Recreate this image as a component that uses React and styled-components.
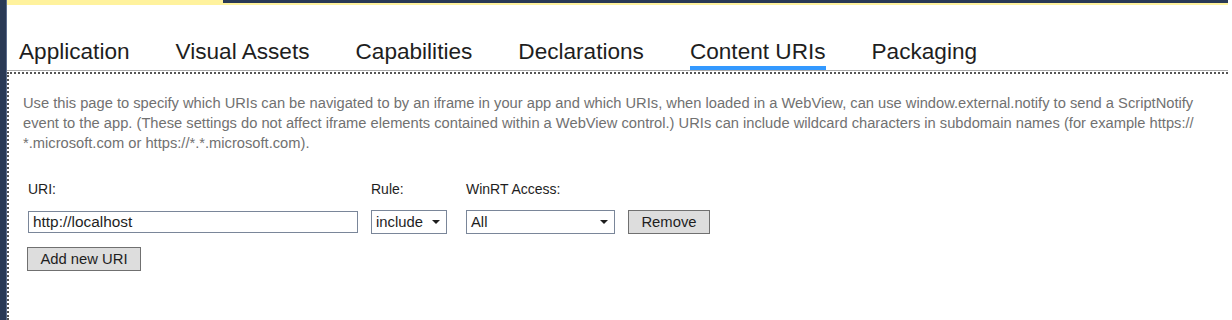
import React from 'react'
import styled, { createGlobalStyle } from 'styled-components';

const GlobalStyle = createGlobalStyle`
  html, body {
    margin: 0;
    padding: 0;
    background: #ffffff;
  }
  body {
    font-family: "Liberation Sans", "Noto Sans", sans-serif;
  }
`;

const tabs = ['Application', 'Visual Assets', 'Capabilities', 'Declarations', 'Content URIs', 'Packaging'];

const App = () => {
  return (
    <Page>
      <GlobalStyle />
      <LeftRail />
      <Main>
        <TopStrip>
          <Highlight />
          <Band />
        </TopStrip>
        <TabBar>
          {tabs.map(t => (
            <Tab key={t} active={t === 'Content URIs'}>{t}</Tab>
          ))}
        </TabBar>
        <Separator />
        <Content>
          <Description>
            Use this page to specify which URIs can be navigated to by an iframe in your app and which URIs, when loaded in a WebView, can use window.external.notify to send a ScriptNotify<br />
            event to the app. (These settings do not affect iframe elements contained within a WebView control.) URIs can include wildcard characters in subdomain names (for example https://<br />
            *.microsoft.com or https://*.*.microsoft.com).
          </Description>
          <UriGrid>
            <Label>URI:</Label>
            <Label>Rule:</Label>
            <Label>WinRT Access:</Label>
            <span />
            <TextBox defaultValue="http://localhost" />
            <SelectBox>
              <span>include</span>
              <Caret />
            </SelectBox>
            <SelectBox>
              <span>All</span>
              <Caret />
            </SelectBox>
            <Button width={82}>Remove</Button>
          </UriGrid>
          <AddButton width={114}>Add new URI</AddButton>
        </Content>
      </Main>
    </Page>
  )
}

const Page = styled.div`
  display: flex;
  width: 1232px;
  height: 320px;
  overflow: hidden;
`;

const LeftRail = styled.div`
  width: 6px;
  background: #293955;
  border-right: 1px solid #5a6c8c;
`;

const Main = styled.div`
  flex: 1;
  display: flex;
  flex-direction: column;
  padding-right: 4px;
`;

const TopStrip = styled.div`
  display: flex;
  height: 5px;
`;

const Highlight = styled.div`
  width: 216px;
  background: #fff29d;
`;

const Band = styled.div`
  flex: 1;
  background: #293955;
  border-bottom: 2px solid #fff29d;
`;

const TabBar = styled.div`
  display: flex;
  gap: 46px;
  padding: 33px 0 0 12px;
`;

const Tab = styled.div`
  font-size: 22.6px;
  line-height: 28px;
  color: #1e1e1e;
  border-bottom: 4px solid ${p => (p.active ? '#3399ff' : 'transparent')};
`;

const Separator = styled.div`
  height: 1px;
  background: #a8a8a8;
`;

const Content = styled.div`
  flex: 1;
  border-top: 2px dotted #555;
  border-left: 2px dotted #555;
  margin-top: 1px;
  padding: 19px 0 0 14px;
`;

const Description = styled.p`
  margin: 0;
  font-size: 14.7px;
  line-height: 20px;
  color: #717171;
  white-space: nowrap;
`;

const UriGrid = styled.div`
  display: grid;
  grid-template-columns: 330px 76px 155px 82px;
  column-gap: 13px;
  row-gap: 13px;
  margin: 27px 0 13px 5px;
  & > *:nth-child(3), & > *:nth-child(7) {
    margin-left: 6px;
  }
`;

const Label = styled.div`
  font-size: 14px;
  line-height: 18px;
  color: #1e1e1e;
`;

const TextBox = styled.input`
  box-sizing: border-box;
  height: 22px;
  border: 1px solid #7a8699;
  padding: 0 4px;
  font: 15.4px "Liberation Sans", "Noto Sans", sans-serif;
  color: #1e1e1e;
  outline: none;
`;

const SelectBox = styled.div`
  box-sizing: border-box;
  height: 24px;
  margin-top: -1px;
  display: flex;
  align-items: center;
  justify-content: space-between;
  border: 1px solid #7a8699;
  padding: 0 6px 0 4px;
  font-size: 14.8px;
  color: #1e1e1e;
`;

const Caret = styled.span`
  width: 0;
  height: 0;
  border-left: 4px solid transparent;
  border-right: 4px solid transparent;
  border-top: 4px solid #1e1e1e;
`;

const Button = styled.button`
  box-sizing: border-box;
  width: ${p => p.width}px;
  height: 24px;
  margin-top: -1px;
  background: #dddddd;
  border: 1px solid #707070;
  border-radius: 0;
  font: 14.8px "Liberation Sans", "Noto Sans", sans-serif;
  color: #1e1e1e;
  padding: 0;
`;

const AddButton = styled(Button)`
  display: block;
  margin: 0 0 0 4px;
`;

export default App
